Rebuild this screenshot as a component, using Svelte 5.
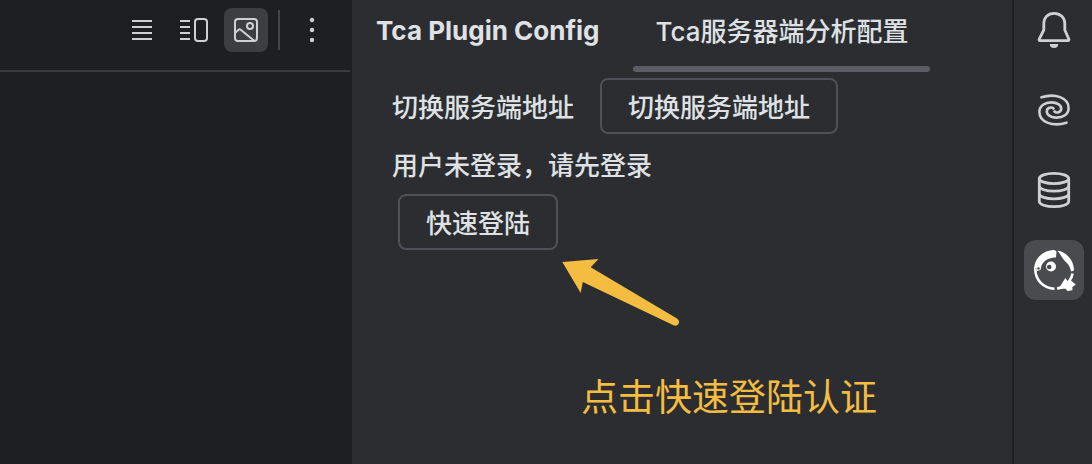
<script>
  const views = [
    { id: 'list', label: 'Editor only' },
    { id: 'split', label: 'Editor and preview' },
    { id: 'preview', label: 'Preview only' }
  ];

  const tools = [
    { id: 'bell', label: 'Notifications' },
    { id: 'spiral', label: 'AI Assistant' },
    { id: 'database', label: 'Database' },
    { id: 'tca', label: 'Tca' }
  ];

  let activeView = $state('preview');
  let activeTool = $state('tca');
</script>

<div class="ide">
  <section class="editor">
    <div class="toolbar">
      {#each views as view (view.id)}
        <button
          class="tool"
          class:active={activeView === view.id}
          aria-label={view.label}
          onclick={() => (activeView = view.id)}
        >
          <svg width="32" height="32" viewBox="0 0 32 32" fill="none" stroke="currentColor" stroke-width="2">
            {#if view.id === 'list'}
              <path d="M6 7h20M6 13h20M6 19h20M6 25h20" />
            {:else if view.id === 'split'}
              <path d="M2 7h10M2 13h10M2 19h10M2 25h10" />
              <rect x="17" y="5" width="12" height="22" rx="3" />
            {:else}
              <rect x="5" y="5" width="22" height="22" rx="3" />
              <circle cx="20" cy="12" r="3" />
              <path d="M5 19l3.300-3.100a2 2 0 0 1 2.700 0L24.500 27" />
            {/if}
          </svg>
        </button>
      {/each}
      <span class="divider"></span>
      <button class="tool" aria-label="More">
        <svg width="32" height="32" viewBox="0 0 32 32" fill="currentColor">
          <circle cx="16" cy="6" r="2.200" />
          <circle cx="16" cy="16" r="2.200" />
          <circle cx="16" cy="26" r="2.200" />
        </svg>
      </button>
    </div>
  </section>

  <main class="panel">
    <header class="panel-header">
      <h1>Tca Plugin Config</h1>
      <button class="tab">Tca服务器端分析配置</button>
    </header>

    <div class="content">
      <div class="row">
        <span id="server-label" class="label">切换服务端地址</span>
        <button class="action" aria-describedby="server-label">切换服务端地址</button>
      </div>
      <p class="status">用户未登录，请先登录</p>
      <button class="action login">快速登陆</button>

      <div class="hint">
        <svg width="120" height="70" viewBox="0 0 120 70" fill="#f4bd41" aria-hidden="true">
          <path d="M1.300 4L37.500 1L29.700 9.200L116 60.500Q119 63 117.600 65.700Q116 68.500 112.500 67.300L21.800 24L19.700 35Z" />
        </svg>
        <p>点击快速登陆认证</p>
      </div>
    </div>
  </main>

  <nav class="stripe">
    {#each tools as tool (tool.id)}
      <button
        class="stripe-button"
        class:active={activeTool === tool.id}
        aria-label={tool.label}
        onclick={() => (activeTool = tool.id)}
      >
        <svg width="60" height="60" viewBox="0 0 60 60" fill="none" stroke="currentColor" stroke-width="2.800">
          {#if tool.id === 'bell'}
            <path
              d="M30 13.300C23.500 13.300 19.800 18 19.800 23.500V30L15.300 38.800Q14.500 40.700 16.200 40.700H43.800Q45.500 40.700 44.700 38.800L40.800 30V23.500C40.800 18 36.500 13.300 30 13.300Z"
              stroke-linejoin="round"
            />
            <path d="M25.800 44h8.400a4.200 4 0 0 1-8.400 0z" fill="currentColor" stroke="none" />
          {:else if tool.id === 'spiral'}
            <g stroke-width="2.600" stroke-linecap="round">
              <path d="M17.500 17.300C31 13 44.600 17.500 44.600 28C44.600 34.500 39 37.600 32.500 37.600C27 37.600 22.800 35 22.800 31.500C22.800 27.500 27.500 26.500 29.500 28.500" />
              <path d="M42.500 42.700C29 47 15.400 42.500 15.400 32C15.400 25.500 21 22.400 27.500 22.400C33 22.400 37.200 25 37.200 28.500C37.200 32.500 32.500 33.500 30.500 31.500" />
            </g>
          {:else if tool.id === 'database'}
            <ellipse cx="30" cy="18.500" rx="14.700" ry="5.200" />
            <path d="M15.300 18.500V41.500C15.300 44.500 22 46.700 30 46.700S44.700 44.500 44.700 41.500V18.500" />
            <path d="M15.300 26C15.300 29 22 31.200 30 31.200S44.700 29 44.700 26M15.300 33.700C15.300 36.700 22 38.900 30 38.900S44.700 36.700 44.700 33.700" />
          {:else}
            <g fill="#fff" stroke="none">
              <path d="M10 30C10 18.500 19 10 30.500 10L32.500 11.500L32 17.500C26 17.500 20.500 19.500 17.500 25.500L16.500 30L13 31L12.200 28Z" />
              <path d="M33.500 10.500C43 12.500 50 20.500 50 30.500L47 31.500C46.500 28 45 25 42.500 22.500C39.500 20 37.500 16 33.500 10.500Z" />
              <circle cx="27" cy="26.500" r="5" />
              <path d="M41.500 40.500L43.500 43L46 41.500L49.500 44.500L47 46.500L47 49L44 49.500L42 47L37 47.500Z" stroke="#fff" />
            </g>
            <circle cx="25.200" cy="27" r="2.300" fill="#4a4b4e" stroke="none" />
            <circle cx="14.500" cy="28.500" r="1.200" fill="#4a4b4e" stroke="none" />
            <path d="M11.300 29C11.300 40 19.500 48.500 30.500 48.700M33 48.500C37 48 40 46.500 43 43.500M48.600 33.500Q48 38 44.500 42" stroke="#fff" stroke-width="2.600" />
          {/if}
        </svg>
      </button>
    {/each}
  </nav>
</div>

<style>
  :global(body) {
    margin: 0;
    background: #2b2d30;
  }

  .ide {
    display: flex;
    min-height: 100vh;
    color: #dfe1e5;
    background: #2b2d30;
    font-family: Inter, 'Noto Sans CJK SC', sans-serif;
    font-size: 26px;
    line-height: 32px;
  }

  button {
    padding: 0;
    border: 0;
    color: inherit;
    background: none;
    font: inherit;
    cursor: pointer;
  }

  svg {
    display: block;
  }

  .editor {
    flex: 0 0 350px;
    border-right: 2px solid #1e1f22;
    background: #1e1f22;
  }

  .toolbar {
    display: flex;
    justify-content: flex-end;
    align-items: center;
    gap: 8px;
    padding: 8px 16px 18px;
    border-bottom: 2px solid #393b40;
    color: #ced0d6;
  }

  .tool {
    display: grid;
    place-items: center;
    width: 44px;
    height: 44px;
    border-radius: 8px;
  }

  .tool.active {
    background: #3d3e41;
  }

  .divider {
    width: 2px;
    height: 40px;
    margin: 0 2px;
    background: #43454a;
  }

  .panel {
    flex: 1;
    min-width: 0;
  }

  .panel-header {
    display: flex;
    gap: 34px;
    height: 72px;
    padding-left: 24px;
  }

  h1 {
    margin: 0;
    padding-top: 15px;
    font-size: 26px;
    font-weight: 700;
  }

  .tab {
    position: relative;
    padding: 0 22px 8px;
    font-weight: 500;
  }

  .tab::after {
    content: '';
    position: absolute;
    inset: auto 0 0;
    height: 6px;
    border-radius: 3px;
    background: #5a5d63;
  }

  .content {
    padding: 6px 24px 0 40px;
    font-weight: 500;
  }

  .row {
    display: flex;
    align-items: center;
    gap: 26px;
  }

  .label {
    padding-top: 4px;
  }

  .action {
    height: 56px;
    padding: 4px 26px 0;
    border: 2px solid #4e5157;
    border-radius: 8px;
  }

  .status {
    margin: 0;
    padding: 16px 0 12px;
  }

  .login {
    margin-left: 6px;
  }

  .hint {
    padding: 8px 0 0 169px;
  }

  .hint p {
    margin: 46px 0 0 20px;
    color: #f4bd41;
    font-size: 37px;
    font-weight: 400;
    line-height: 48px;
  }

  .stripe {
    display: flex;
    flex-direction: column;
    gap: 20px;
    padding: 0 8px 0 10px;
    border-left: 2px solid #1e1f22;
    color: #ced0d6;
  }

  .stripe-button {
    width: 60px;
    height: 60px;
    border-radius: 12px;
  }

  .stripe-button.active {
    background: #4a4b4e;
  }
</style>
